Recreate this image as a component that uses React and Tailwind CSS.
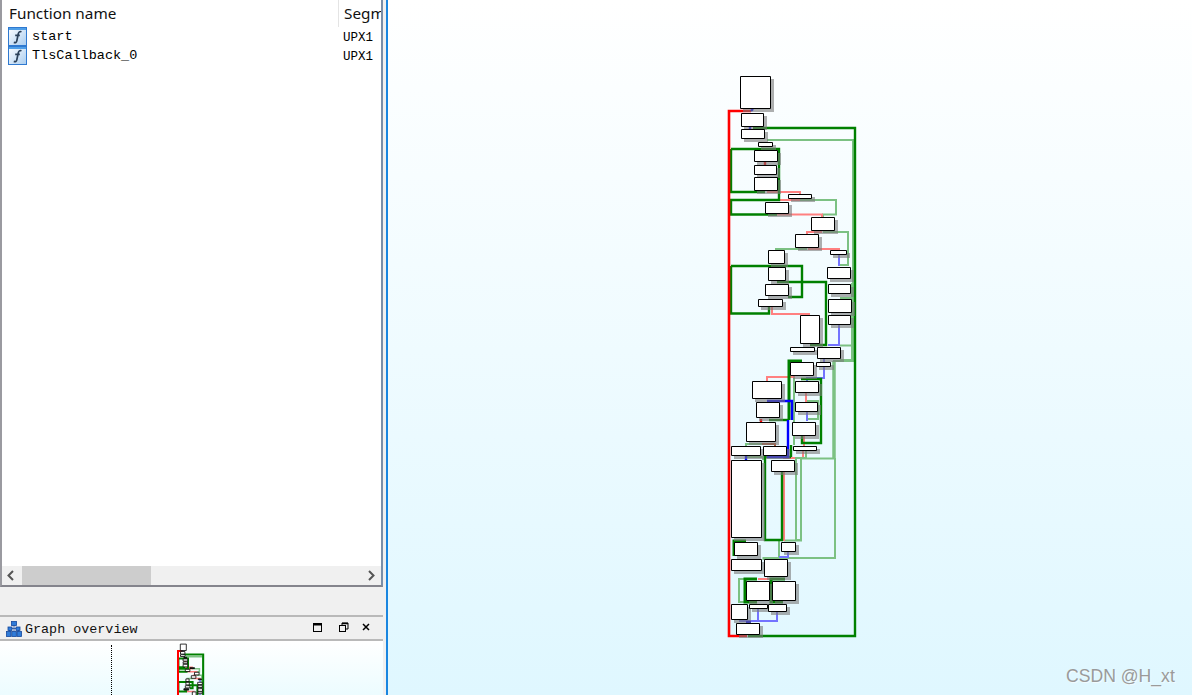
import React from "react";

const N = [[740,76,31,33],[741,113,23,14],[741,129,24,10],[758,142,15,5],[754,150,24,12],[754,165,23,10],[754,177,24,14],[788,194,24,5],[765,202,24,12],[811,217,24,14],[795,234,24,14],[830,250,17,5],[768,250,17,14],[768,267,18,14],[827,267,24,12],[765,284,24,12],[828,284,23,10],[758,299,25,8],[828,299,24,14],[828,315,23,10],[800,315,20,29],[790,347,25,5],[817,347,24,12],[790,362,24,14],[816,362,15,5],[752,381,30,18],[795,381,24,12],[756,402,24,16],[795,402,23,10],[746,422,30,20],[792,422,24,14],[731,446,30,10],[763,446,24,10],[793,446,24,5],[731,460,31,78],[771,460,24,12],[734,542,24,14],[781,542,15,10],[731,559,31,12],[764,559,24,18],[746,581,24,20],[772,581,24,20],[731,604,17,16],[749,604,19,5],[768,604,19,8],[736,623,24,12]];

const RED = "#ff0000", GRN = "#008000", LG = "#7cc183", LR = "#ff8080", LB = "#7373ff", BLU = "#0000ff";
const E = [
  [LG, 2, "767,140 853,140 853,361 834,361 834,458.5 801,458.5 801,540.5 784,540.5"],
  [LG, 3.5, "834,361 834,458"],
  [LG, 2, "835,458 835,558 779,558 779,541"],
  [LG, 2, "779,558 763.5,558 763.5,560"],
  [LR, 2, "767,192 800,192 800,194"],
  [LR, 2, "777,200 799,200 799,198"],
  [LG, 2, "800,200 836,200 836,214.5 823,214.5 823,217"],
  [LR, 2, "777,214.5 822,214.5 822,217"],
  [LR, 2, "807,234 807,232 822,232"],
  [LG, 2, "823,232 848,232 848,265 840,265"],
  [LR, 2, "808,249 839,249 839,250"],
  [LG, 2, "776,250 776,249 807,249"],
  [LB, 2, "839,255 839,266"],
  [LR, 2, "772,307 772,314 809,314 809,315"],
  [LB, 2, "839,325 839,345 828,345"],
  [LG, 2, "852,283 852,360 840,360"],
  [LG, 2, "840,298 852,298"],
  [LG, 2, "840,345.5 852,345.5"],
  [LB, 2, "824,358 824,378 807,378 807,381"],
  [LR, 2, "767,381 767,377 795,377"],
  [LG, 2, "794,378 794,445"],
  [LG, 2, "806,401 818,401 818,419 806,419"],
  [LB, 2, "807,412 807,421"],
  [LR, 2, "806,393 806,402"],
  [LR, 2, "804,436 804,446"],
  [LR, 2, "783,458 803,458 803,451"],
  [LG, 2, "806,451 806,458 796,458 796,540 801,540"],
  [LG, 2, "746,446 746,444 762,444"],
  ["#b05a3a", 2, "762,444 775,444 775,446"],
  [LG, 2, "746,457 763,457 763,460"],
  [LR, 2, "784,472 784,541"],
  [LB, 2, "779,557 788,557 788,552"],
  [LG, 2, "745,579 739,579 739,602 745,602"],
  [LR, 2, "758,579 770,579"],
  [LB, 2, "740,620 740,621 777,621 777,612"],
  [LB, 2, "758,609 758,621"],
  [GRN, 2.4, "753,128 855,128 855,636 748,636"],
  [GRN, 2.4, "731,149 779,149 779,200 731,200 731,214.5 777,214.5"],
  [GRN, 2.4, "731,149 731,192 765,192"],
  [GRN, 2.4, "731,266 802,266 802,297 788,297"],
  [GRN, 2.4, "731,266 731,313.5 769,313.5 769,307"],
  [GRN, 2.4, "777,282 826,282 826,345 810,345"],
  [GRN, 3, "802,361 789,361 789,420"],
  [GRN, 2.4, "769,420 788,420"],
  [GRN, 2.4, "791,445 791,457"],
  [GRN, 2.4, "782,472 782,540 765,540 765,457 791,457"],
  [GRN, 2.4, "801,379 821,379 821,443 802,443 802,436"],
  [GRN, 3, "734,556 734,541 746,541"],
  [GRN, 3, "757,579 745,579 745,602 757,602"],
  [GRN, 3, "785,579 771,579 771,602 783,602"],
  [BLU, 2.4, "767,401 792,401 792,420"],
  [BLU, 2.4, "788,420 788,457 767,457"],
  [RED, 2.6, "751,111 729,111 729,636 747,636"],
  [BLU, 2.4, "751,111 753,109"],
  [BLU, 2.4, "750,127 750,129"],
  [BLU, 2.4, "746,456 746,460"],
  [BLU, 2.4, "746,622 751,622"],
  [RED, 2.4, "761,419 761,422"],
  [RED, 2.4, "765,162 765,165"],
];

function Graph({ mini }) {
  return (
    <g>
      {E.map(([c, w, p], i) => (
        <polyline key={i} points={p} fill="none" stroke={c} strokeWidth={mini ? (c === GRN || c === RED ? 2 : 1.5) : w} vectorEffect="non-scaling-stroke" />
      ))}
      {!mini && N.map(([x, y, w, h], i) => (
        <rect key={i} x={x + 3} y={y + 3} width={w} height={h} fill="#7a7a7a" fillOpacity="0.6" />
      ))}
      {N.map(([x, y, w, h], i) => (
        <rect key={i} x={x + 0.5} y={y + 0.5} width={w - 1} height={h - 1} fill={mini && h < 10 ? "#222222" : "#ffffff"} stroke="#000000" strokeWidth={mini ? 0.8 : 1} vectorEffect="non-scaling-stroke" />
      ))}
    </g>
  );
}

function FnIcon({ id }) {
  return (
    <svg width="19" height="19" viewBox="0 0 19 19" className="shrink-0">
      <defs>
        <linearGradient id={id} x1="0" y1="0" x2="1" y2="1">
          <stop offset="0" stopColor="#ffffff" />
          <stop offset="1" stopColor="#a9cdf0" />
        </linearGradient>
      </defs>
      <rect x="0.5" y="0.5" width="18" height="18" fill={`url(#${id})`} stroke="#2f79d0" />
      <rect x="1" y="1" width="17" height="2" fill="#4f9fe8" />
      <path d="M13.5 4.8c-1.7-.6-2.8.2-3.2 2l-1.5 7c-.3 1.6-1.3 2.1-3 1.6M7.2 8.3h4.6" fill="none" stroke="#2b4058" strokeWidth="1.7" />
    </svg>
  );
}

function Row({ name, id }) {
  return (
    <div className="flex items-center h-[19px] pl-[8px] relative">
      <FnIcon id={id} />
      <span className="ml-[5px] pt-[2px] text-[13.5px] text-black" style={{ fontFamily: '"Liberation Mono", monospace' }}>{name}</span>
      <span className="absolute left-[343px] top-[2px] text-[12.5px] text-black" style={{ fontFamily: '"Liberation Mono", monospace' }}>UPX1</span>
    </div>
  );
}

export default function App() {
  return (
    <div className="flex w-[1192px] h-[695px] overflow-hidden bg-[#f0f0f0]">
      <div className="w-[386px] shrink-0 flex flex-col">
        <div className="w-[383px] h-[587px] shrink-0 flex flex-col bg-white border-l-2 border-r-2 border-b-2 border-b-[#84848c] border-l-[#9a9aa0] border-r-[#7a8ea8]">
          <div className="h-[27px] shrink-0 flex text-[15.3px] text-[#111]" style={{ fontFamily: '"Noto Sans", sans-serif' }}>
            <div className="w-[337px] pl-[7px] pt-[2px] border-r border-[#e4e4e4]">Function name</div>
            <div className="pl-[5px] pt-[2px] w-[42px] h-[27px] overflow-hidden">Segm</div>
          </div>
          <div className="flex-1 -ml-[2px]">
            <Row name="start" id="fa" />
            <Row name="TlsCallback_0" id="fb" />
          </div>
          <div className="h-[19px] shrink-0 flex items-center bg-[#f0f0f0]">
            <svg width="20" height="19" viewBox="0 0 20 19" className="shrink-0">
              <path d="M11 5l-4.5 4.5L11 14" fill="none" stroke="#555" strokeWidth="2" />
            </svg>
            <div className="w-[129px] h-[19px] bg-[#cdcdcd]" />
            <div className="flex-1" />
            <svg width="20" height="19" viewBox="0 0 20 19" className="shrink-0">
              <path d="M8 5l4.5 4.5L8 14" fill="none" stroke="#555" strokeWidth="2" />
            </svg>
          </div>
        </div>
        <div className="h-[28px] shrink-0" />
        <div className="w-[383px] h-[26px] shrink-0 flex items-center border-y-2 border-[#b9b9b9] pl-[6px] bg-[#f0f0f0]">
          <svg width="16" height="16" viewBox="0 0 16 16" className="shrink-0 mt-[1px]">
            <g fill="#2f7bd8" stroke="#14489c" strokeWidth="0.8">
              <path d="M8 4v3M3.5 7.5h9M3.5 7.5v3M8 7.5v3M12.5 7.5v3" fill="none" />
              <rect x="5.5" y="0.5" width="5" height="4" />
              <rect x="0.5" y="10.5" width="4.5" height="5" />
              <rect x="5.8" y="10.5" width="4.5" height="5" />
              <rect x="11" y="10.5" width="4.5" height="5" />
              <rect x="2" y="6" width="4" height="3.5" />
              <rect x="10" y="6" width="4" height="3.5" />
            </g>
          </svg>
          <span className="ml-[3px] mt-[4px] text-[13.4px] text-[#111] flex-1" style={{ fontFamily: '"Liberation Mono", monospace' }}>Graph overview</span>
          <svg width="70" height="22" viewBox="0 0 70 22" className="shrink-0 mr-[9px]">
            <rect x="9.5" y="6.5" width="8" height="8" fill="none" stroke="#000" />
            <rect x="9.5" y="6.5" width="8" height="2" fill="#000" />
            <rect x="35.5" y="8.5" width="6" height="6" fill="none" stroke="#000" />
            <path d="M38 8.5v-2.5h6v6h-2.5" fill="none" stroke="#000" />
            <path d="M38 6.5h6" stroke="#000" strokeWidth="1.5" />
            <path d="M59 7l6 6M65 7l-6 6" stroke="#000" strokeWidth="1.5" />
          </svg>
        </div>
        <div className="w-[383px] flex-1 relative overflow-hidden bg-linear-to-b from-white to-[#ecfcff]">
          <div className="absolute left-[111px] top-[4px] bottom-0 border-l border-dotted border-black" />
          <svg width="383" height="54" viewBox="0 0 383 54" className="block">
            <g transform="translate(178 3) scale(0.2) translate(-729 -76)">
              <Graph mini />
            </g>
          </svg>
        </div>
      </div>
      <div className="w-[2px] shrink-0 bg-[#1a86e0]" />
      <div className="flex-1 relative bg-linear-to-b from-white to-[#dff7ff]">
        <svg width="804" height="695" viewBox="388 0 804 695" className="block">
          <Graph />
        </svg>
        <div className="absolute left-[678px] top-[663px] text-[17.6px] text-[#9a9a9a] whitespace-nowrap [text-shadow:1px_1px_1px_rgba(255,255,255,0.7)]" style={{ fontFamily: '"Liberation Sans", sans-serif' }}>CSDN @H_xt</div>
      </div>
    </div>
  );
}
